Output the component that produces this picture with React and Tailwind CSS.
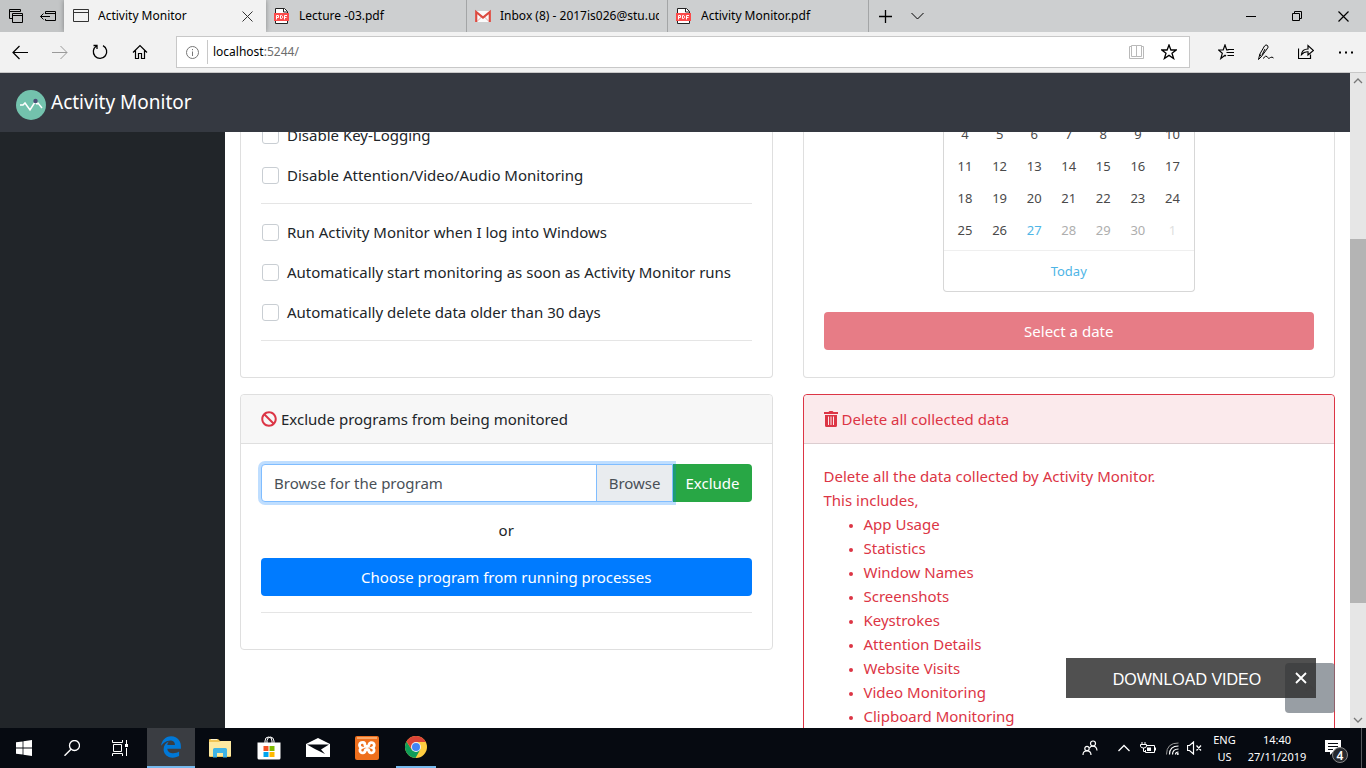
import React, { useState } from "react";
import { FaEdgeLegacy, FaBan } from "react-icons/fa";

function Icon({ w = 16, h = 16, className = "", children }) {
  return (
    <svg width={w} height={h} viewBox={`0 0 ${w} ${h}`} fill="none" stroke="currentColor" strokeWidth="1" className={`shrink-0 ${className}`} aria-hidden="true">
      {children}
    </svg>
  );
}

function PdfIcon() {
  return (
    <Icon>
      <path d="M1.500 .5h9l3 3v12h-12z" fill="#fff" stroke="#222" />
      <path d="M9.500 .5v3.500h4" stroke="#222" />
      <rect x="0" y="5" width="15" height="8" fill="#fb4b4b" stroke="none" />
      <path d="M2.500 11.500V7.500h2v2h-2M6.500 7.500v3h1.200l.8-.8V8.300l-.8-.8zM10.500 11.500v-4h2.500M10.500 9.500h2" stroke="#fff" />
    </Icon>
  );
}

function GmailIcon() {
  return (
    <Icon>
      <rect x="0" y="3" width="16" height="11" fill="#fafafa" stroke="none" />
      <path d="M2 13.500L6.500 9M14 13.500L9.500 9" stroke="#e5a9a5" />
      <path d="M1.200 14V4L8 9.500 14.800 4v10" stroke="#dc4b41" strokeWidth="2.200" />
    </Icon>
  );
}

function WindowIcon() {
  return (
    <Icon className="text-[#333]">
      <path d="M.5 1.500h15v12H.5zM.5 4.500h15" />
    </Icon>
  );
}

const tabs = [
  { title: "Activity Monitor", icon: <WindowIcon />, active: true },
  { title: "Lecture -03.pdf", icon: <PdfIcon /> },
  { title: "Inbox (8) - 2017is026@stu.ucsc", icon: <GmailIcon /> },
  { title: "Activity Monitor.pdf", icon: <PdfIcon /> },
];

function TabBar() {
  return (
    <div className="flex h-8 shrink-0 bg-[#cdcfd0] text-black">
      <div className="flex w-16 shrink-0 items-center gap-4 bg-[#c3c5c6] pl-2">
        <button aria-label="Tabs set aside">
          <Icon w={16} h={16}>
            <path d="M4.500 10.500h-3v-9h11v2M1.500 3.500h11M4.500 5.500h10v9h-10zM4.500 7.500h10" />
          </Icon>
        </button>
        <button aria-label="Set tabs aside">
          <Icon w={16} h={16}>
            <path d="M5.500 6V3.500h10v9h-10V11M5.500 5.500h10M.5 8.500H10M3.500 5.500l-3 3 3 3" />
          </Icon>
        </button>
      </div>
      {tabs.map((t) => (
        <div
          key={t.title}
          className={
            t.active
              ? "flex w-[202px] items-center gap-[9px] bg-[#f2f2f2] px-[9px] shadow-[0_0_5px_rgba(0,0,0,0.35)]"
              : "flex w-[201px] items-center gap-[9px] border-r border-[#a3a5a6] px-2"
          }
        >
          {t.icon}
          <span className="min-w-0 flex-1 overflow-hidden text-xs whitespace-nowrap">{t.title}</span>
          {t.active && (
            <button aria-label="Close tab" className="pr-1">
              <Icon w={11} h={11} className="text-[#333]">
                <path d="M.5 .5l10 10M10.500 .5l-10 10" />
              </Icon>
            </button>
          )}
        </div>
      ))}
      <button aria-label="New tab" className="grid w-8 place-items-center">
        <Icon w={13} h={13}>
          <path d="M6.500 0v13M0 6.500h13" strokeWidth="1.300" />
        </Icon>
      </button>
      <button aria-label="Tab previews" className="grid w-8 place-items-center">
        <Icon w={13} h={8}>
          <path d="M.5 1l6 6 6-6" />
        </Icon>
      </button>
      <div className="ml-auto flex">
        <button aria-label="Minimize" className="grid w-[46px] place-items-center">
          <Icon w={10} h={10}>
            <path d="M0 5.500h10" />
          </Icon>
        </button>
        <button aria-label="Restore" className="grid w-[46px] place-items-center">
          <Icon w={10} h={10}>
            <path d="M.5 2.500h7v7h-7zM2.500 2.500v-2h7v7h-2" />
          </Icon>
        </button>
        <button aria-label="Close" className="grid w-[46px] place-items-center">
          <Icon w={11} h={11}>
            <path d="M.5 .5l10 10M10.500 .5l-10 10" strokeWidth="1.200" />
          </Icon>
        </button>
      </div>
    </div>
  );
}

function NavButton({ label, className = "", children }) {
  return (
    <button aria-label={label} className={`grid w-10 place-items-center ${className}`}>
      <Icon>{children}</Icon>
    </button>
  );
}

function Toolbar() {
  return (
    <div className="flex h-[41px] shrink-0 items-stretch border-b border-[#c8c8c8] bg-[#f2f2f2] text-black">
      <NavButton label="Back">
        <path d="M16 8.500H1M7.500 2L1 8.500 7.500 15" strokeWidth="1.200" />
      </NavButton>
      <NavButton label="Forward" className="text-[#9a9a9a]">
        <path d="M0 8.500h15M8.500 2L15 8.500 8.500 15" />
      </NavButton>
      <NavButton label="Refresh">
        <path d="M4.500 2A6.700 6.700 0 1 0 11 1.700M1.500 1.500h3.500V5" strokeWidth="1.300" />
      </NavButton>
      <NavButton label="Home">
        <path d="M1 8.500L8 1.500l7 7M3.500 6.500v8h3v-5h3v5h3v-8" strokeWidth="1.200" />
      </NavButton>
      <div className="mx-4 my-1 flex min-w-0 flex-1 items-center border border-[#c8c8c8] bg-white">
        <button aria-label="Site information" className="grid w-[30px] place-items-center text-[#777]">
          <Icon w={13} h={13}>
            <circle cx="6.500" cy="6.500" r="6" />
            <path d="M6.500 5.500V10M6.500 3v1.200" />
          </Icon>
        </button>
        <div className="h-6 w-px bg-[#c8c8c8]" />
        <div className="flex-1 pl-[5px] text-xs">
          localhost<span className="text-[#6d6d6d]">:5244/</span>
        </div>
        <button aria-label="Reading view" className="grid w-8 place-items-center text-[#b9b9b9]">
          <Icon>
            <path d="M2.500 1.500h5v11h-5zM7.500 1.500h5v11h-5zM2.500 2.500h-2v12h14v-12h-2" />
          </Icon>
        </button>
        <button aria-label="Add to favorites" className="mr-1 grid w-8 place-items-center">
          <Icon>
            <path d="M8 1l1.900 5h5.300l-4.200 3.300 1.600 5.200L8 11.400l-4.600 3.100L5 9.300.8 6h5.300z" strokeWidth="1.300" />
          </Icon>
        </button>
      </div>
      <NavButton label="Favorites">
        <path d="M10.500 6H8.700L7 1 5.200 6H.5l3.800 3.300L2.800 14.500 7 11.200l1 .8M9.500 5.500H16M8.500 8.500H16M9.500 11.500H16" strokeWidth="1.200" />
      </NavButton>
      <NavButton label="Add notes">
        <path d="M.5 15.500l1.300-5.300L6.500 2Q8 0 9.500 1.500T9 5L3.300 12.700.5 15.500M1.800 10.200l1.500 2.500M7 5L4 11M5 14.500q3-3.500 4-2t1.500 1.800 2-.8 3 .5" />
      </NavButton>
      <NavButton label="Share">
        <path d="M.5 4.500v10h12v-4M3.500 10.500Q4 5 10 5V1.500l5.500 5-5.500 4.500V7.800Q6 7.500 3.500 10.500z" strokeWidth="1.200" />
      </NavButton>
      <NavButton label="Settings and more">
        <path d="M1 8.500h2M7 8.500h2M13 8.500h2" strokeWidth="2" />
      </NavButton>
    </div>
  );
}

function CheckRow({ id, children }) {
  return (
    <div className="flex h-6 items-center gap-2 pl-px">
      <input id={id} type="checkbox" className="size-[17px] shrink-0 appearance-none rounded-[3px] border border-[#c9ced3] bg-white checked:bg-[#007bff]" />
      <label htmlFor={id}>{children}</label>
    </div>
  );
}

function SettingsCard() {
  return (
    <section className="flex flex-col gap-4 rounded-b border border-t-0 border-[#dfdfdf] px-5 pt-[5px] pb-9">
      <CheckRow id="keylogging">Disable Key-Logging</CheckRow>
      <CheckRow id="attention">Disable Attention/Video/Audio Monitoring</CheckRow>
      <hr className="border-[#e5e5e5]" />
      <CheckRow id="startup">Run Activity Monitor when I log into Windows</CheckRow>
      <CheckRow id="autostart">Automatically start monitoring as soon as Activity Monitor runs</CheckRow>
      <CheckRow id="autodelete">Automatically delete data older than 30 days</CheckRow>
      <hr className="border-[#e5e5e5]" />
    </section>
  );
}

const weeks = [
  [4, 5, 6, 7, 8, 9, 10],
  [11, 12, 13, 14, 15, 16, 17],
  [18, 19, 20, 21, 22, 23, 24],
  [25, 26, 27, 28, 29, 30, 1],
];

function dayColor(day) {
  if (day === 1) return "text-[#e0e0e0]";
  if (day === 27) return "text-[#4eb5e6]";
  if (day > 27) return "text-[#aeaeae]";
  return "text-[#4a4a4a]";
}

function CalendarCard() {
  return (
    <section className="rounded-b border border-t-0 border-[#dfdfdf] px-5 pb-[27px]">
      <div className="mx-auto w-[252px] rounded-b border border-t-0 border-[#d7d7d7]">
        <div className="px-1 pb-1">
          <table className="w-full table-fixed">
            <tbody>
              {weeks.map((w) => (
                <tr key={w[0]} className="h-8">
                  {w.map((d) => (
                    <td key={d} className={`p-0 text-center text-[13px] ${dayColor(d)}`}>{d}</td>
                  ))}
                </tr>
              ))}
            </tbody>
          </table>
        </div>
        <div className="border-t border-[#efefef]">
          <button className="h-10 w-full text-[13px] text-[#4eb5e6]">Today</button>
        </div>
      </div>
      <button className="mt-5 h-[38px] w-full rounded bg-[#e77c86] text-white">Select a date</button>
    </section>
  );
}

function ExcludeCard() {
  const [path, setPath] = useState("");
  return (
    <section className="self-start rounded border border-[#dfdfdf]">
      <h2 className="flex h-[49px] items-center gap-1 rounded-t border-b border-[#dfdfdf] bg-[#f7f7f7] px-5">
        <FaBan className="size-4 text-[#dc3545]" />
        Exclude programs from being monitored
      </h2>
      <div className="flex flex-col gap-4 px-5 pt-5 pb-9">
        <div className="flex h-[38px]">
          <div className="z-10 flex min-w-0 flex-1 rounded-l border border-[#80bdff] bg-white text-[#495057] shadow-[0_0_0_3px_rgba(0,123,255,0.25)]">
            <input
              type="text"
              aria-label="Program path"
              placeholder="Browse for the program"
              value={path}
              onChange={(e) => setPath(e.target.value)}
              className="min-w-0 flex-1 rounded-l px-3 outline-none placeholder:text-[#495057]"
            />
            <button className="border-l border-[#80bdff] bg-[#e9ecef] px-3">Browse</button>
          </div>
          <button className="rounded-r bg-[#28a745] px-3 text-white">Exclude</button>
        </div>
        <p className="text-center">or</p>
        <button className="h-[38px] rounded bg-[#007bff] text-white">Choose program from running processes</button>
        <hr className="border-[#e5e5e5]" />
      </div>
    </section>
  );
}

const collected = [
  "App Usage",
  "Statistics",
  "Window Names",
  "Screenshots",
  "Keystrokes",
  "Attention Details",
  "Website Visits",
  "Video Monitoring",
  "Clipboard Monitoring",
];

function DeleteCard() {
  return (
    <section className="rounded-t border border-[#dc3545] text-[#dc3545]">
      <h2 className="flex h-[49px] items-center gap-1 rounded-t border-b border-[#dccdd0] bg-[#fbeaec] px-5">
        <Icon w={14} h={16}>
          <path d="M0 1h4.500L5.500 0h3l1 1H14v2H0zM1 4h12v10.500Q13 16 11.500 16h-9Q1 16 1 14.500z" fill="currentColor" stroke="none" />
          <path d="M4.500 5.500v8.500M7 5.500v8.500M9.500 5.500v8.500" stroke="#fbeaec" />
        </Icon>
        Delete all collected data
      </h2>
      <div className="p-5">
        <p>Delete all the data collected by Activity Monitor.</p>
        <p>This includes,</p>
        <ul className="list-disc pl-10 marker:text-xs">
          {collected.map((c) => (
            <li key={c}>{c}</li>
          ))}
        </ul>
      </div>
    </section>
  );
}

function AppHeader() {
  return (
    <header className="flex h-[59px] shrink-0 items-center gap-[5px] bg-[#353941] pl-4 text-[19px] text-white">
      <Icon w={30} h={30} className="mt-1">
        <circle cx="15" cy="15" r="15" fill="#73c2ad" stroke="none" />
        <path d="M4 15h3l2-2 5 7L19 12l2 2 1-1 4 5" stroke="#fff" strokeWidth="1.500" />
        <circle cx="19.500" cy="11" r="2.200" fill="#4b4e78" stroke="none" />
      </Icon>
      <span className="pb-px">Activity Monitor</span>
    </header>
  );
}

function ScrollBar() {
  return (
    <div className="flex w-4 shrink-0 flex-col items-center bg-[#e6e6e6] text-[#777]">
      <Icon w={16} h={16}>
        <path d="M4 10l4-4 4 4" strokeWidth="1.300" />
      </Icon>
      <div className="flex w-full flex-1 flex-col">
        <div className="grow-[150]" />
        <div className="w-full grow-[364] bg-[#b4b4b4]" />
        <div className="grow-[109]" />
      </div>
      <Icon w={16} h={16}>
        <path d="M4 6l4 4 4-4" strokeWidth="1.300" />
      </Icon>
    </div>
  );
}

function TaskButton({ label, className = "w-[49px]", children }) {
  return (
    <button aria-label={label} className={`grid place-items-center ${className}`}>
      {children}
    </button>
  );
}

function TaskBar() {
  return (
    <footer className="flex h-10 shrink-0 bg-[#060a11] text-xs text-white">
      <TaskButton label="Start" className="w-12">
        <Icon>
          <path d="M0 2.300L6.600 1.400v6.200H0zM7.400 1.300L16 0v7.600H7.400zM0 8.400h6.600v6.200L0 13.700zM7.400 8.400H16V16l-8.600-1.300z" fill="#fff" stroke="none" />
        </Icon>
      </TaskButton>
      <TaskButton label="Search" className="w-12">
        <Icon>
          <circle cx="10.500" cy="5.500" r="5" strokeWidth="1.300" />
          <path d="M7 9.200L.5 15.700" strokeWidth="1.500" />
        </Icon>
      </TaskButton>
      <TaskButton label="Task view" className="w-[51px] pr-[3px]">
        <Icon>
          <path d="M1.500 4.500h8v7h-8zM.5 0v2.500h10V0M.5 16v-2.500h10V16M14.500 0v4M14.500 8v8" />
          <path d="M13 4h3v3h-3z" fill="#fff" stroke="none" />
        </Icon>
      </TaskButton>
      <TaskButton label="Edge" className="w-12 border-b-2 border-[#76b9ed] bg-[#3a3d42]">
        <FaEdgeLegacy className="size-[22px] text-[#0078d7]" />
      </TaskButton>
      <TaskButton label="File Explorer">
        <Icon w={22} h={20}>
          <path d="M0 2q0-1 1-1h8l2 2h10q1 0 1 1v14q0 1-1 1H1q-1 0-1-1z" fill="#f0c455" stroke="none" />
          <path d="M0 4h10l2-1h10v15H0z" fill="#fde9a0" stroke="none" />
          <path d="M2 1.500h6" stroke="#fff4cf" />
          <path d="M4 19.500v-8q0-1.500 1.500-1.500h11q1.500 0 1.500 1.500v8h-4V15H8v4.500z" fill="#3fb4e6" stroke="none" />
        </Icon>
      </TaskButton>
      <TaskButton label="Microsoft Store">
        <Icon w={24} h={24}>
          <path d="M8 7.500V5q0-4 3.500-4T15 5v2.500M10 7V4.500Q10.500 1 13.500 1T17 5v2" />
          <path d="M.5 6.500h23v15.500q0 1.500-1.500 1.500H2q-1.500 0-1.500-1.500z" fill="#fff" stroke="none" />
          <path d="M6.500 10h5v5h-5z" fill="#f25022" stroke="none" />
          <path d="M12.500 10h5v5h-5z" fill="#7fba00" stroke="none" />
          <path d="M6.500 16h5v5h-5z" fill="#00a4ef" stroke="none" />
          <path d="M12.500 16h5v5h-5z" fill="#ffb900" stroke="none" />
        </Icon>
      </TaskButton>
      <TaskButton label="Mail">
        <Icon w={24} h={20}>
          <path d="M0 6L12 0l12 6v13H0z" fill="#fff" stroke="none" />
          <path d="M1 6.500h22L15 11.500l4 4.500L8 10.500z" fill="#060a11" stroke="none" />
        </Icon>
      </TaskButton>
      <TaskButton label="XAMPP">
        <Icon w={24} h={24}>
          <rect width="24" height="24" rx="2" fill="#ee6f1d" stroke="none" />
          <path d="M2 1h20v2H2z" fill="#f8a86a" stroke="none" />
          <path d="M8 6.500a2.700 2.700 0 0 0-1.500 5.300 2.700 2.700 0 1 0 3.500 3.700q0-2 2-2t2 2a2.700 2.700 0 1 0 3.500-3.700A2.700 2.700 0 1 0 14 8.500q0 2-2 2t-2-1Q10 6.500 8 6.500z" stroke="#fff" strokeWidth="2.800" />
        </Icon>
      </TaskButton>
      <TaskButton label="Chrome">
        <span className="grid h-10 w-10 place-items-center border-b-2 border-[#76b9ed]">
          <Icon w={22} h={22}>
            <circle cx="11" cy="11" r="11" fill="#ffcd40" stroke="none" />
            <path d="M1.470 5.500A11 11 0 0 0 10.500 22L15.300 13.500 11 11 6.700 13.500z" fill="#0f9d58" stroke="none" />
            <path d="M1.470 5.500A11 11 0 0 1 20.530 5.500L20.800 6.100H11L6.700 13.500z" fill="#db4437" stroke="none" />
            <circle cx="11" cy="11" r="5" fill="#f1f1f1" stroke="none" />
            <circle cx="11" cy="11" r="4" fill="#4285f4" stroke="none" />
          </Icon>
        </span>
      </TaskButton>
      <div className="ml-auto flex">
        <TaskButton label="People" className="w-11">
          <Icon>
            <circle cx="11" cy="3.500" r="2.500" strokeWidth="1.200" />
            <circle cx="5" cy="8.500" r="2.200" strokeWidth="1.200" />
            <path d="M1 15q0-4.200 4-4.200T9 15M7.500 8q1-1.800 3.500-1.800 3.500 0 4 4.300" strokeWidth="1.200" />
          </Icon>
        </TaskButton>
        <TaskButton label="Show hidden icons" className="w-6">
          <Icon w={12} h={8}>
            <path d="M.5 7L6 1.500 11.500 7" strokeWidth="1.300" />
          </Icon>
        </TaskButton>
        <TaskButton label="Battery" className="w-6">
          <Icon>
            <path d="M7 5.500h7.500v7h-9V10M15.500 7.500v3M2 2v2M5 2v2M.5 4.500h6v1.500q0 2-3 2t-3-2zM3.500 8v3.500h2" />
            <path d="M7 7.500h4V11H7z" fill="#fff" stroke="none" />
          </Icon>
        </TaskButton>
        <TaskButton label="Network" className="w-6">
          <Icon w={13} h={13}>
            <path d="M.5 12.500Q.5 .8 12.500 1" stroke="#999" />
            <path d="M3.500 12.500Q3.500 4 12.500 4M6.500 12.500Q6.500 7 12.500 7M9.500 12.500Q9.500 10 12.500 10" strokeWidth="1.200" />
            <circle cx="11.800" cy="12" r="1" fill="#fff" stroke="none" />
          </Icon>
        </TaskButton>
        <TaskButton label="Volume muted" className="w-5">
          <Icon w={15} h={14}>
            <path d="M.5 4.500h2l4-3.500v12l-4-3.500h-2zM9.500 4.500l4.500 5M14 4.500l-4.500 5" strokeWidth="1.200" />
          </Icon>
        </TaskButton>
        <button className="w-[41px] text-center text-[11px] leading-[17px]">
          ENG
          <br />
          US
        </button>
        <button className="w-16 text-center text-[11px] leading-[17px] whitespace-nowrap">
          14:40
          <br />
          27/11/2019
        </button>
        <button aria-label="Notifications" className="relative grid w-[52px] place-items-center pr-1">
          <Icon>
            <path d="M0 0h16v12H8l-3 3v-3H0z" fill="#fff" stroke="none" />
            <path d="M3 3.500h10M3 6.500h10M3 9.500h5" stroke="#060a11" />
          </Icon>
          <span className="absolute top-[19px] left-[23px] grid size-4 place-items-center rounded-full border border-[#888] bg-[#26292e] text-xs font-semibold">4</span>
        </button>
        <div className="w-[5px] border-l border-[#55585d]" />
      </div>
    </footer>
  );
}

export default function App() {
  return (
    <div className="flex h-screen flex-col overflow-hidden bg-white font-['Noto_Sans','Open_Sans',sans-serif] text-[15px] leading-6 text-[#212529]">
      <TabBar />
      <Toolbar />
      <div className="relative flex min-h-0 flex-1">
        <div className="flex min-w-0 flex-1 flex-col">
          <AppHeader />
          <div className="flex min-h-0 flex-1">
            <aside className="w-[225px] shrink-0 bg-[#212529]" />
            <main className="min-w-0 flex-1 overflow-hidden px-[15px]">
              <div className="-mt-[14px] grid grid-cols-2 gap-x-[30px] gap-y-4">
                <SettingsCard />
                <CalendarCard />
                <ExcludeCard />
                <DeleteCard />
              </div>
            </main>
          </div>
        </div>
        <ScrollBar />
        <button aria-label="Scroll to top" className="absolute right-[31px] bottom-[15px] z-20 grid h-[50px] w-[50px] place-items-center rounded bg-[#6c757d]/70 text-[#8b8f93]">
          <Icon w={12} h={8}>
            <path d="M1.500 6.500L6 2l4.500 4.500" strokeWidth="2.500" />
          </Icon>
        </button>
        <div className="absolute right-[50px] bottom-[30px] z-30 flex h-10 w-[250px] items-center bg-[rgba(51,51,51,0.86)] font-['Liberation_Sans',sans-serif] text-white">
          <button className="flex-1 pt-[3px] pl-[14px] text-center text-base">DOWNLOAD VIDEO</button>
          <button aria-label="Close download bar" className="mr-2 grid size-[14px] place-items-center">
            <Icon w={12} h={12}>
              <path d="M1 1l10 10M11 1L1 11" strokeWidth="1.800" />
            </Icon>
          </button>
        </div>
      </div>
      <TaskBar />
    </div>
  );
}
